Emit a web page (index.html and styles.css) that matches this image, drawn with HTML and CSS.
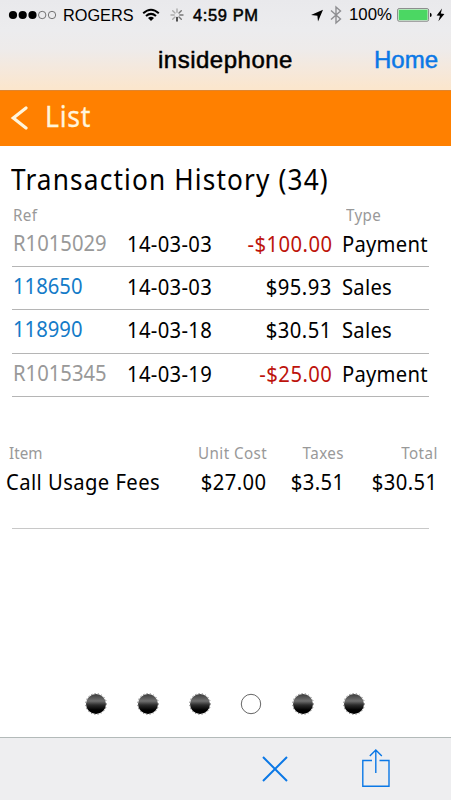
FILE: index.html
```html
<!DOCTYPE html>
<html lang="en">
<head>
<meta charset="utf-8">
<meta name="viewport" content="width=device-width">
<title>insidephone</title>
<link rel="stylesheet" href="styles.css">
</head>
<body>
<header class="top">
  <div class="status">
    <svg class="signal" width="50" height="12" viewBox="0 0 50 12"><g><circle cx="5" cy="6" r="4.1"/><circle cx="14.7" cy="6" r="4.1"/><circle cx="24.5" cy="6" r="4.1"/></g><g fill="none" stroke="#555" stroke-width=".8"><circle cx="34.2" cy="6" r="3.7"/><circle cx="44" cy="6" r="3.7"/></g></svg>
    <span class="carrier">ROGERS</span>
    <svg class="wifi" width="18" height="14" viewBox="0 0 18 14"><path d="M1.2 5.2Q9-1.8 16.8 5.2M4 8.1Q9 3.7 14 8.1" fill="none" stroke="#000" stroke-width="2"/><path d="M6 10.1Q9 7.6 12 10.1L9 13Z"/></svg>
    <svg class="spinner" width="16" height="16" viewBox="0 0 16 16" stroke-width="1.4" stroke-linecap="round"><path stroke="#111" d="M8 10.5V14"/><path stroke="#777" d="M10 10l2.3 2.3M10.8 8H14M10 6l2.3-2.3"/><path stroke="#aaa" d="M8 5.3V2M6 6L3.7 3.7M5.2 8H2M6 10l-2.3 2.3"/></svg>
    <span class="time">4:59 PM</span>
    <svg class="arrow" width="14" height="13" viewBox="0 0 14 13"><path d="M13 .8L8 12.5 7.4 6.7 1 6.1Z"/></svg>
    <svg class="bluetooth" width="12" height="20" viewBox="0 0 12 20" fill="none" stroke="#8e8e91" stroke-width="1.4"><path d="M1 5.5L10.5 14 6 18V2L10.5 6 1 14.5"/></svg>
    <span class="percent">100%</span>
    <svg class="battery" width="36" height="14" viewBox="0 0 36 14"><rect x=".6" y=".6" width="31" height="12.6" rx="1.5" fill="#fff" stroke="#666" stroke-width=".8"/><rect x="1.6" y="1.6" width="29" height="10.6" fill="#4bd763"/><path d="M33 4.8q1.7.2 1.7 2.1T33 9Z"/></svg>
    <svg class="bolt" width="9" height="14" viewBox="0 0 9 14"><path d="M6 .5L.6 7.5 4 7.8 2.4 13.2 8.4 5.9 4.8 5.5Z"/></svg>
  </div>
  <nav class="nav"><h1>insidephone</h1><a class="home">Home</a></nav>
</header>
<div class="back"><svg width="18" height="26" viewBox="0 0 18 26"><path d="M16 2L3.3 12 16 22" fill="none" stroke="#fff5dc" stroke-width="3.2" stroke-linecap="round"/></svg><span class="t back-label">List</span></div>
<main>
  <h2><span class="t title">Transaction History (34)</span></h2>
  <div class="history-head"><span class="t">Ref</span><span class="t">Type</span></div>
  <section class="history">
    <div class="row"><div class="ref"><span class="t">R1015029</span></div><span class="t date">14-03-03</span><div class="amount negative"><span class="t">-$100.00</span></div><span class="t type">Payment</span></div>
    <div class="row"><div class="ref link"><span class="t">118650</span></div><span class="t date">14-03-03</span><div class="amount"><span class="t">$95.93</span></div><span class="t type">Sales</span></div>
    <div class="row"><div class="ref link"><span class="t">118990</span></div><span class="t date">14-03-18</span><div class="amount"><span class="t">$30.51</span></div><span class="t type">Sales</span></div>
    <div class="row"><div class="ref"><span class="t">R1015345</span></div><span class="t date">14-03-19</span><div class="amount negative"><span class="t">-$25.00</span></div><span class="t type">Payment</span></div>
  </section>
  <section class="items">
    <div class="item-row item-head"><span class="t item-title">Item</span><span class="t num">Unit Cost</span><span class="t num">Taxes</span><span class="t num">Total</span></div>
    <div class="item-row"><span class="t item-name">Call Usage Fees</span><span class="t num">$27.00</span><span class="t num">$3.51</span><span class="t num">$30.51</span></div>
  </section>
  <hr>
  <div class="pager">
    <svg viewBox="0 0 24 24"><defs><linearGradient id="ball" x1="0" y1="0" x2="0" y2="1"><stop offset="0" stop-color="#3c3c3c"/><stop offset=".35" stop-color="#707070"/><stop offset=".55" stop-color="#2c2c2c"/><stop offset=".8" stop-color="#000"/></linearGradient></defs><circle cx="12" cy="12" r="10.5" class="edge"/><circle cx="12" cy="12" r="10"/></svg>
    <svg viewBox="0 0 24 24"><circle cx="12" cy="12" r="10.5" class="edge"/><circle cx="12" cy="12" r="10"/></svg>
    <svg viewBox="0 0 24 24"><circle cx="12" cy="12" r="10.5" class="edge"/><circle cx="12" cy="12" r="10"/></svg>
    <svg viewBox="0 0 24 24"><circle cx="12" cy="12" r="9.7" class="current"/></svg>
    <svg viewBox="0 0 24 24"><circle cx="12" cy="12" r="10.5" class="edge"/><circle cx="12" cy="12" r="10"/></svg>
    <svg viewBox="0 0 24 24"><circle cx="12" cy="12" r="10.5" class="edge"/><circle cx="12" cy="12" r="10"/></svg>
  </div>
</main>
<footer>
  <svg width="28" height="28" viewBox="0 0 28 28"><path d="M2 2L26 26M26 2L2 26" stroke-width="2"/></svg>
  <svg class="share" width="30" height="40" viewBox="0 0 30 40"><path d="M11 12.5H1.8V38.2H28V12.5H18.5M14.8 25V2M8.8 8L14.8 2L20.8 8" stroke-width="1.4"/></svg>
</footer>
</body>
</html>
```
FILE: styles.css
```css
* { box-sizing: border-box; }
body { margin: 0; width: 451px; height: 800px; display: flex; flex-direction: column; background: #fff; color: #000; font-family: "Noto Sans", sans-serif; overflow: hidden; }
svg { display: block; flex: none; }
h1, h2 { margin: 0; font-weight: 400; }
.top { height: 90px; background: linear-gradient(#e9e9ec 0, #ececee 30px, #eeebea 50px, #f6e8da 72px, #fbe6cd 88px); font-family: "Liberation Sans", sans-serif; }
.status { height: 30px; display: flex; align-items: center; padding-left: 8px; white-space: nowrap; font-size: 16.3px; }
.carrier { width: 78px; padding-left: 5px; }
.wifi { margin-left: 6px; }
.spinner { margin-left: 9px; }
.time { width: 67px; margin-left: 8px; font-size: 16.5px; letter-spacing: .6px; -webkit-text-stroke: .5px #000; }
.arrow { margin-left: 50px; }
.bluetooth { margin-left: 6px; }
.percent { width: 43px; margin-left: 7px; font-size: 16.8px; }
.battery { margin-left: 5px; }
.bolt { margin-left: 3px; }
.nav { height: 60px; display: grid; grid-template-columns: 158px 1fr 77px; line-height: 60px; }
.nav h1 { grid-column: 2; font-size: 24px; letter-spacing: .5px; -webkit-text-stroke: .5px #000; }
.home { font-size: 24px; color: #0b78e6; -webkit-text-stroke: .5px #0b78e6; }
.t { display: inline-block; justify-self: start; white-space: nowrap; transform: scaleX(.92); transform-origin: left; }
.back { height: 56px; display: flex; align-items: center; padding-left: 10px; background: #ff8000; border-top: 1px solid #df8530; color: #fff5dc; }
.back-label { margin-left: 17px; font-size: 29px; line-height: 50px; letter-spacing: .8px; padding-bottom: 5px; -webkit-text-stroke: .3px #fff5dc; }
main { flex: 1; display: flex; flex-direction: column; }
h2 { padding: 13px 0 0 11px; font-size: 28.5px; line-height: 40px; height: 57px; }
.title { letter-spacing: 1.25px; }
.history-head { height: 21px; padding-left: 13px; display: grid; grid-template-columns: 333px 1fr; color: #999; font-size: 16.5px; line-height: 24px; letter-spacing: .4px; }
.history { margin: 0 22px 0 12px; font-size: 22px; }
.row { height: 43.2px; display: grid; grid-template-columns: 115px 89px 116px 1fr; line-height: 38px; border-bottom: 1px solid #b5b5b5; }
.ref { padding-left: 1px; color: #999; line-height: 36px; }
.link { color: #147bc8; }
.date { letter-spacing: .35px; }
.amount { text-align: right; letter-spacing: .5px; }
.amount .t { transform-origin: right; }
.negative { color: #bd130c; }
.type { margin-left: 10px; letter-spacing: .25px; }
.items { margin: 43px 12px 0 6px; height: 88px; }
.item-row { display: grid; grid-template-columns: minmax(0, 1fr) 100px 77px 94px; font-size: 22px; line-height: 31px; letter-spacing: .45px; }
.item-head { color: #999; font-size: 16.5px; line-height: 26px; }
.item-title { margin-left: 3px; letter-spacing: 0; }
.num { justify-self: end; transform-origin: right; margin-right: 1px; }
hr { height: 1px; border: 0; margin: 0 22px 0 12px; background: #c8c8c8; }
.pager { margin: 163px 0 0 84.4px; display: grid; grid-template-columns: repeat(6, 51.6px); }
.pager svg { width: 24px; height: 24px; fill: url(#ball); }
.pager .edge { fill: none; stroke: #888; stroke-width: 1; stroke-dasharray: 1.2 2.2; }
.pager .current { fill: #fff; stroke: #555; stroke-width: .9; }
footer { height: 63px; display: flex; align-items: center; padding-left: 261px; background: #eeeef0; border-top: 1px solid #b3bab9; }
footer svg { fill: none; stroke: #0b78e6; }
.share { margin-left: 72px; margin-top: -3px; }
```
